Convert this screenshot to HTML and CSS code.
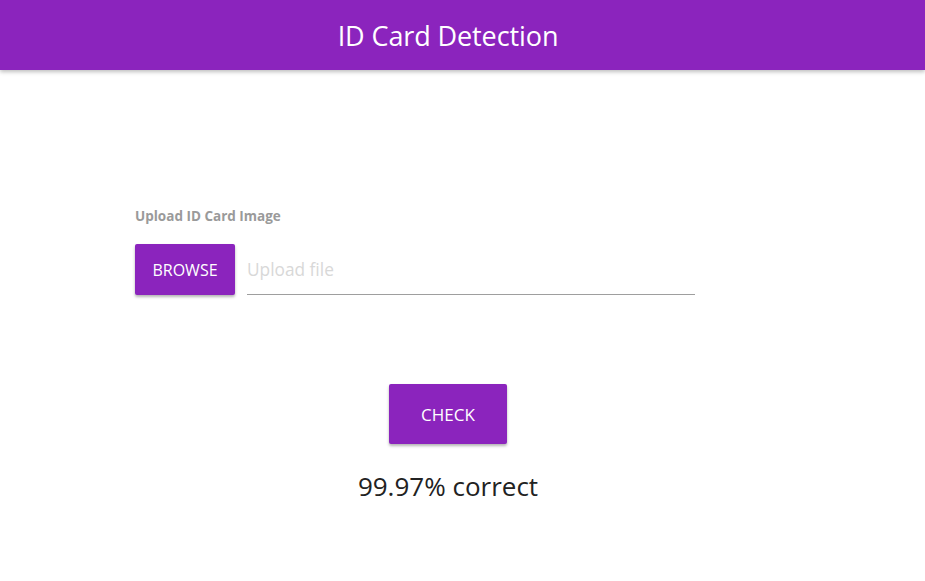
FILE: index.html
```html
<!DOCTYPE html>
<html>
<head>
<meta charset="utf-8">
<link rel="stylesheet" href="styles.css">
</head>
<body>
<header class="appbar">
  <div class="appbar-inner"><h1 class="title">ID Card Detection</h1></div>
</header>
<main class="page">
  <section class="upload">
    <div class="upload-label">Upload ID Card Image</div>
    <div class="upload-row">
      <button class="btn btn-browse">BROWSE</button>
      <div class="file-field"><span class="placeholder">Upload file</span></div>
    </div>
  </section>
  <section class="actions">
    <button class="btn btn-check">CHECK</button>
    <div class="result">99.97% correct</div>
  </section>
</main>
</body>
</html>
```
FILE: styles.css
```css
html, body { margin: 0; padding: 0; background: #fff; }
body { font-family: "Open Sans", "Noto Sans", sans-serif; color: #222; }
.appbar {
  background: #8b24bd;
  height: 70px;
  box-shadow: 0 2px 4px rgba(0,0,0,0.25);
}
.appbar-inner { width: 896px; height: 70px; display: flex; align-items: center; justify-content: center; }
.title { margin: 0; color: #fff; font-weight: 400; font-size: 27px; letter-spacing: -0.1px; }
.page { display: flex; flex-direction: column; width: 896px; }
.upload { padding: 138px 0 0 135px; }
.upload-label { font-size: 13.5px; font-weight: 700; color: #9a9a9a; height: 17px; line-height: 17px; }
.upload-row { display: flex; align-items: flex-end; margin-top: 19px; gap: 12px; }
.btn {
  background: #8b24bd; color: #fff; border: none; border-radius: 2px;
  font-family: inherit; box-shadow: 0 2px 3px rgba(0,0,0,0.3);
  padding: 0; cursor: pointer;
}
.btn-browse { width: 100px; height: 51px; font-size: 16px; }
.file-field { width: 448px; height: 50px; border-bottom: 1px solid #9e9e9e; display: flex; align-items: center; }
.placeholder { color: #d8d8d8; font-size: 17.3px; }
.actions { display: flex; flex-direction: column; align-items: center; margin-top: 89px; }
.btn-check { width: 118px; height: 60px; font-size: 17px; }
.result { margin-top: 24px; font-size: 26px; color: #222; }
```
